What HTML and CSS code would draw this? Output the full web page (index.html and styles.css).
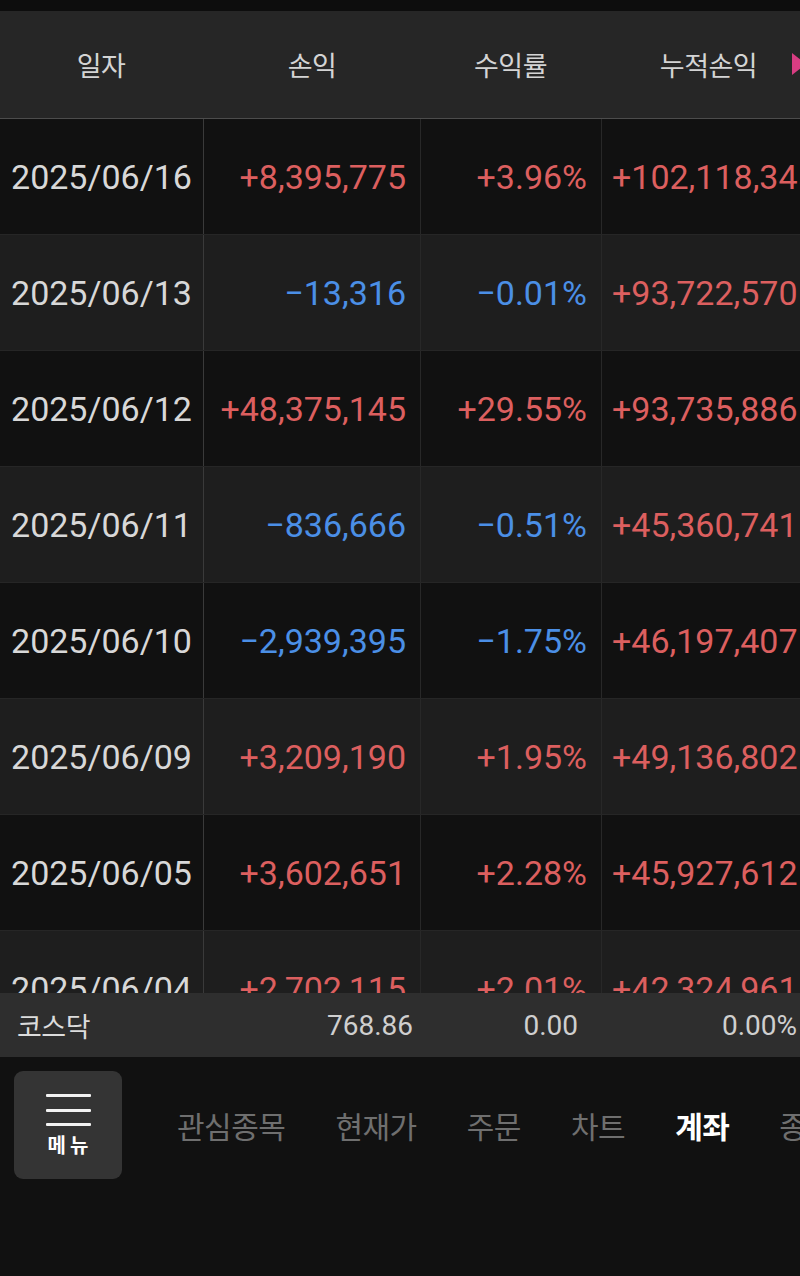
FILE: index.html
```html
<!DOCTYPE html>
<html lang="ko">
<head>
<meta charset="utf-8">
<title>계좌 - 일별 손익</title>
<link rel="stylesheet" href="styles.css">
</head>
<body>
<div class="status"></div>
<div class="table">
  <div class="thead">
    <div class="th">일자</div>
    <div class="th">손익</div>
    <div class="th">수익률</div>
    <div class="th">누적손익</div>
    <span class="more-arrow"></span>
  </div>
  <div class="row odd">
    <div class="td date">2025/06/16</div>
    <div class="td num up">+8,395,775</div>
    <div class="td num up">+3.96%</div>
    <div class="td cum up">+102,118,345</div>
  </div>
  <div class="row even">
    <div class="td date">2025/06/13</div>
    <div class="td num down">−13,316</div>
    <div class="td num down">−0.01%</div>
    <div class="td cum up">+93,722,570</div>
  </div>
  <div class="row odd">
    <div class="td date">2025/06/12</div>
    <div class="td num up">+48,375,145</div>
    <div class="td num up">+29.55%</div>
    <div class="td cum up">+93,735,886</div>
  </div>
  <div class="row even">
    <div class="td date">2025/06/11</div>
    <div class="td num down">−836,666</div>
    <div class="td num down">−0.51%</div>
    <div class="td cum up">+45,360,741</div>
  </div>
  <div class="row odd">
    <div class="td date">2025/06/10</div>
    <div class="td num down">−2,939,395</div>
    <div class="td num down">−1.75%</div>
    <div class="td cum up">+46,197,407</div>
  </div>
  <div class="row even">
    <div class="td date">2025/06/09</div>
    <div class="td num up">+3,209,190</div>
    <div class="td num up">+1.95%</div>
    <div class="td cum up">+49,136,802</div>
  </div>
  <div class="row odd">
    <div class="td date">2025/06/05</div>
    <div class="td num up">+3,602,651</div>
    <div class="td num up">+2.28%</div>
    <div class="td cum up">+45,927,612</div>
  </div>
  <div class="row even">
    <div class="td date">2025/06/04</div>
    <div class="td num up">+2,702,115</div>
    <div class="td num up">+2.01%</div>
    <div class="td cum up">+42,324,961</div>
  </div>
</div>
<div class="ticker">
  <div class="tk-name">코스닥</div>
  <div class="tk-val">768.86</div>
  <div class="tk-val">0.00</div>
  <div class="tk-val">0.00%</div>
</div>
<div class="nav">
  <div class="menu-btn">
    <span class="bar"></span>
    <span class="bar"></span>
    <span class="bar"></span>
    <span class="menu-label">메뉴</span>
  </div>
  <div class="tabs">
    <span class="tab">관심종목</span>
    <span class="tab">현재가</span>
    <span class="tab">주문</span>
    <span class="tab">차트</span>
    <span class="tab active">계좌</span>
    <span class="tab">종목정보</span>
  </div>
</div>
</body>
</html>
```
FILE: styles.css
```css
html, body {
  margin: 0;
  padding: 0;
  background: #111111;
}
body {
  width: 800px;
  height: 1276px;
  overflow: hidden;
  font-family: "Noto Sans CJK KR", "Noto Sans", sans-serif;
  color: #d6d6d6;
}
.status {
  height: 11px;
  background: #0d0d0d;
}
.table {
  height: 982px;
  overflow: hidden;
  width: 800px;
}
.thead,
.row {
  display: grid;
  grid-template-columns: 204px 216px 181px 215px;
  width: 816px;
}
.thead {
  position: relative;
  height: 107px;
  background: #262626;
  border-bottom: 1px solid #4c4c4c;
  align-items: center;
}
.th {
  text-align: center;
  font-size: 27px;
  letter-spacing: -0.5px;
  color: #d4d4d4;
  line-height: 1;
}
.th:first-child { padding-right: 2px; }
.more-arrow {
  position: absolute;
  left: 792px;
  top: 42px;
  width: 0;
  height: 0;
  border-top: 11px solid transparent;
  border-bottom: 11px solid transparent;
  border-left: 14px solid #d83d82;
}
.row {
  height: 116px;
  border-bottom: 1px solid #262626;
  box-sizing: border-box;
}
.row.odd { background: #111111; }
.row.even { background: #1e1e1e; }
.td {
  display: flex;
  align-items: center;
  font-family: Roboto, "Noto Sans", sans-serif;
  font-size: 34px;
  white-space: nowrap;
  box-sizing: border-box;
  border-left: 1px solid #282828;
}
.td.date {
  justify-content: center;
  color: #d8d8d8;
  border-left: none;
  border-right: 1px solid #3a3a3a;
}
.td.date + .td { border-left: none; }
.td.num {
  justify-content: flex-end;
  padding-right: 14px;
}
.td.cum {
  justify-content: flex-start;
  padding-left: 10px;
}
.up { color: #dc5f5f; }
.down { color: #4b8fe6; }

.ticker {
  height: 64px;
  background: #2e2e2e;
  display: grid;
  grid-template-columns: 1fr 120px 165px 219px;
  align-items: center;
  padding: 0 3px 0 17px;
  box-sizing: border-box;
  width: 800px;
}
.tk-name {
  font-size: 27px;
  color: #dcdcdc;
  letter-spacing: -0.5px;
}
.tk-val {
  text-align: right;
  font-family: Roboto, "Noto Sans", sans-serif;
  font-size: 28px;
  color: #cfcfcf;
}

.nav {
  height: 219px;
  background: #111111;
  display: flex;
  align-items: flex-start;
  padding: 14px 0 0 14px;
  box-sizing: border-box;
  overflow: hidden;
}
.menu-btn {
  flex: none;
  width: 108px;
  height: 108px;
  background: #343434;
  border-radius: 9px;
  display: flex;
  flex-direction: column;
  align-items: center;
  padding-top: 23px;
  box-sizing: border-box;
}
.bar {
  display: block;
  width: 45px;
  height: 3px;
  background: #f2f2f2;
  border-radius: 1px;
  margin-bottom: 11.5px;
}
.menu-label {
  margin-top: -3px;
  font-size: 20px;
  font-weight: 700;
  color: #ffffff;
  letter-spacing: 4px;
  padding-left: 4px;
  line-height: 1;
}
.tabs {
  display: flex;
  gap: 50px;
  margin-left: 55px;
  height: 108px;
  align-items: center;
  white-space: nowrap;
}
.tab {
  font-size: 30px;
  letter-spacing: -0.5px;
  color: #6f6f6f;
  line-height: 1;
}
.tab.active {
  color: #ffffff;
  font-weight: 700;
}
```
